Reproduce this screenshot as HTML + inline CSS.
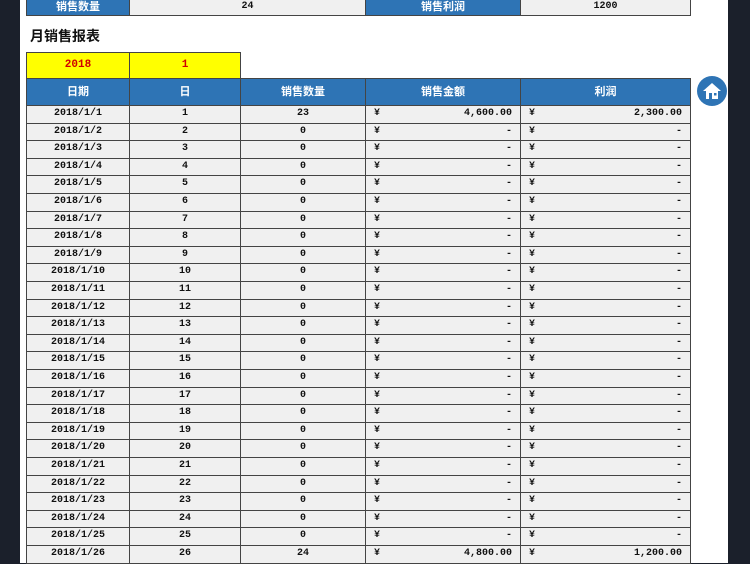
<!DOCTYPE html><html><head><meta charset="utf-8"><style>
body{margin:0;width:750px;height:563px;overflow:hidden;background:#1b202b;position:relative;font-family:"Liberation Mono","Noto Sans CJK SC",monospace;}
.pg{position:absolute;left:20px;top:0;width:708px;height:563px;background:#fff}
.c{position:absolute;box-sizing:border-box;border:1px solid #444;font-size:10px;line-height:16px;text-align:center;color:#111;background:#f0f0f0;font-weight:bold}
.b{background:#2e74b5;color:#fff;font-family:"Liberation Sans","Noto Sans CJK SC",sans-serif;font-size:11px;font-weight:bold}
.y{background:#ffff00;color:#d00000;font-weight:bold;font-size:11px}
.l{text-align:left;padding-left:8px}.r{position:absolute;right:8px;top:0}
h1{position:absolute;left:30px;top:26px;margin:0;font-size:14px;font-family:"Liberation Sans","Noto Sans CJK SC",sans-serif;font-weight:bold;color:#111}
.home{position:absolute;left:697px;top:76px;width:30px;height:30px;border-radius:50%;background:#2e74b5}
</style></head><body><div class="pg"></div>
<div class="c b" style="left:26px;top:-2px;width:104px;height:18px">销售数量</div>
<div class="c" style="left:129px;top:-2px;width:237px;height:18px">24</div>
<div class="c b" style="left:365px;top:-2px;width:156px;height:18px">销售利润</div>
<div class="c" style="left:520px;top:-2px;width:171px;height:18px">1200</div>
<h1>月销售报表</h1>
<div class="c y" style="left:26px;top:52px;width:104px;height:27px;line-height:25px">2018</div>
<div class="c y" style="left:129px;top:52px;width:112px;height:27px;line-height:25px">1</div>
<div class="c b" style="left:26px;top:78px;width:104px;height:28px;line-height:26px">日期</div>
<div class="c b" style="left:129px;top:78px;width:112px;height:28px;line-height:26px">日</div>
<div class="c b" style="left:240px;top:78px;width:126px;height:28px;line-height:26px">销售数量</div>
<div class="c b" style="left:365px;top:78px;width:156px;height:28px;line-height:26px">销售金额</div>
<div class="c b" style="left:520px;top:78px;width:171px;height:28px;line-height:26px">利润</div>
<div class="home"><svg width="30" height="30" viewBox="0 0 30 30"><path d="M15 7 L6 15 H9 V23 H21 V15 H24 Z" fill="#fff"/><rect x="12" y="17" width="3" height="6" fill="#2e74b5"/><rect x="17" y="17" width="2.5" height="2.5" fill="#2e74b5"/></svg></div>
<div id="rows"></div>
<script>
var h='';for(var i=1;i<=26;i++){var t=105+(i-1)*17.6,q=i==1?'23':i==26?'24':'0',a=i==1?'4,600.00':i==26?'4,800.00':'-',p=i==1?'2,300.00':i==26?'1,200.00':'-';
var s='top:'+t+'px;height:18.6px;';
h+='<div class="c" style="left:26px;'+s+'width:104px">2018/1/'+i+'</div><div class="c" style="left:129px;'+s+'width:112px">'+i+'</div><div class="c" style="left:240px;'+s+'width:126px">'+q+'</div><div class="c l" style="left:365px;'+s+'width:156px">¥<span class="r">'+a+'</span></div><div class="c l" style="left:520px;'+s+'width:171px">¥<span class="r">'+p+'</span></div>';}
document.getElementById('rows').innerHTML=h;
</script></body></html>
